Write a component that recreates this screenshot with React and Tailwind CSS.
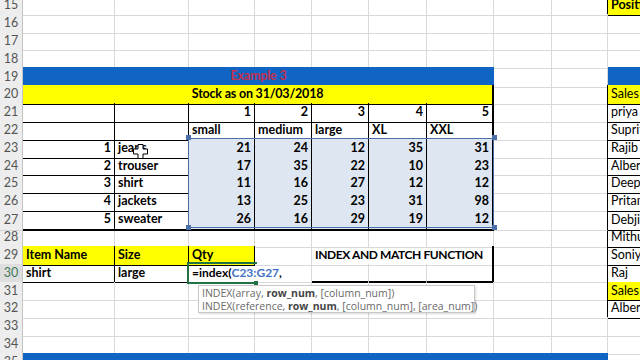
import React from "react";
import clsx from "clsx";

const ROW = "grid grid-cols-[23px_92px_74px_66px_57px_57px_58px_67px_58px_56px_1fr] h-[17.85px]";
const GL = "border-r border-b border-[#d9d9d9]";
const BK = "border-r border-b border-black";
const JB = "border-r border-b border-r-black border-b-[#d9d9d9]";

function Hdr({ n, active }) {
  return (
    <div
      className={clsx(
        "flex items-center justify-center text-[12.5px] border-r border-b border-r-[#c4c4c4] border-b-[#d4d4d4]",
        active ? "bg-[#dedede] text-[#3d7a58]" : "bg-[#ededed] text-[#555555]"
      )}
    >
      {n}
    </div>
  );
}

function C({ cls, children }) {
  return (
    <div className={clsx("flex items-center px-[3px] whitespace-nowrap min-w-0", cls)}>{children}</div>
  );
}

function Row({ children }) {
  return <div className={ROW}>{children}</div>;
}

function Empty({ from = 1, to = 8 }) {
  const out = [];
  for (let i = from; i <= to; i++) out.push(<C key={i} cls={GL} />);
  return <>{out}</>;
}

const data = [
  [1, "jeans", 21, 24, 12, 35, 31, "Rajib"],
  [2, "trouser", 17, 35, 22, 10, 23, "Albert"],
  [3, "shirt", 11, 16, 27, 12, 12, "Deepak"],
  [4, "jackets", 13, 25, 23, 31, 98, "Pritam"],
  [5, "sweater", 26, 16, 29, 19, 12, "Debjit"],
];

function KCell({ children, yellow, bold }) {
  return (
    <C cls={clsx("border-b border-b-black", yellow && "bg-[#ffff00]", bold && "font-bold")}>{children}</C>
  );
}

export default function App() {
  return (
    <div className="w-[640px] h-[360px] overflow-hidden bg-white font-['Lato',sans-serif] text-[12.5px] text-black">
      <div className="-mt-[4px]">
        {/* 15 */}
        <Row>
          <Hdr n={15} />
          <Empty to={8} />
          <C cls={JB} />
          <C cls="bg-[#ffff00] font-bold border-b border-b-black">Positi</C>
        </Row>
        {[16, 17, 18].map((n) => (
          <Row key={n}>
            <Hdr n={n} />
            <Empty to={9} />
            <C cls="border-b border-[#d9d9d9]" />
          </Row>
        ))}
        {/* 19 */}
        <Row>
          <Hdr n={19} />
          <C cls="col-span-7 justify-center bg-[#1065c4] border-b-2 border-b-black text-[#c4304e] font-bold tracking-[-0.2px]">
            Example 3
          </C>
          <Empty from={8} to={9} />
          <C cls="bg-[#1065c4] border-b border-b-black" />
        </Row>
        {/* 20 */}
        <Row>
          <Hdr n={20} />
          <C cls="col-span-7 justify-center bg-[#ffff00] border-r-2 border-b border-black font-bold text-[12.5px] tracking-[-0.2px]">
            Stock as on 31/03/2018
          </C>
          <C cls={GL} />
          <C cls={JB} />
          <KCell yellow>Sales</KCell>
        </Row>
        {/* 21 */}
        <Row>
          <Hdr n={21} />
          <C cls={BK} />
          <C cls={BK} />
          <C cls={clsx(BK, "justify-end font-bold")}>1</C>
          <C cls={clsx(BK, "justify-end font-bold")}>2</C>
          <C cls={clsx(BK, "justify-end font-bold")}>3</C>
          <C cls={clsx(BK, "justify-end font-bold")}>4</C>
          <C cls="border-r-2 border-b border-black justify-end font-bold">5</C>
          <C cls={GL} />
          <C cls={JB} />
          <KCell>priya</KCell>
        </Row>
        {/* 22 */}
        <Row>
          <Hdr n={22} />
          <C cls={BK} />
          <C cls={BK} />
          <C cls={clsx(BK, "font-bold")}>small</C>
          <C cls={clsx(BK, "font-bold")}>medium</C>
          <C cls={clsx(BK, "font-bold")}>large</C>
          <C cls={clsx(BK, "font-bold")}>XL</C>
          <C cls="border-r-2 border-b border-black font-bold">XXL</C>
          <C cls={GL} />
          <C cls={JB} />
          <KCell>Supriti</KCell>
        </Row>
        {/* 23-27 */}
        <div className="relative">
          {data.map((d, i) => {
            const last = i === data.length - 1;
            const bb = last ? "border-b-2" : "border-b";
            return (
              <Row key={i}>
                <Hdr n={23 + i} />
                <C cls={clsx("border-r border-black justify-end font-bold", bb)}>{d[0]}</C>
                <C cls={clsx("border-r border-black font-bold", bb)}>{d[1]}</C>
                <C cls={clsx("border-r border-black justify-end font-bold bg-[#dee6f1]", bb)}>{d[2]}</C>
                <C cls={clsx("border-r border-black justify-end font-bold bg-[#dee6f1]", bb)}>{d[3]}</C>
                <C cls={clsx("border-r border-black justify-end font-bold bg-[#dee6f1]", bb)}>{d[4]}</C>
                <C cls={clsx("border-r border-black justify-end font-bold bg-[#dee6f1]", bb)}>{d[5]}</C>
                <C cls={clsx("border-r-2 border-black justify-end font-bold bg-[#dee6f1]", bb)}>{d[6]}</C>
                <C cls={GL} />
                <C cls={JB} />
                <KCell>{d[7]}</KCell>
              </Row>
            );
          })}
          {/* range highlight overlay */}
          <div className="pointer-events-none absolute left-[188px] top-[-1px] w-[306px] bottom-0 border-[1.5px] border-[#4b6fa8]">
            <div className="absolute -left-[3.5px] -top-[3.5px] w-[5px] h-[5px] bg-[#4b6fa8]" />
            <div className="absolute -right-[3.5px] -top-[3.5px] w-[5px] h-[5px] bg-[#4b6fa8]" />
            <div className="absolute -left-[3.5px] -bottom-[3.5px] w-[5px] h-[5px] bg-[#4b6fa8]" />
            <div className="absolute -right-[3.5px] -bottom-[3.5px] w-[5px] h-[5px] bg-[#4b6fa8]" />
          </div>
          {/* move cursor */}
          <svg className="pointer-events-none absolute left-[133px] top-[5px]" width="15" height="15" viewBox="0 0 15 15">
            <path d="M5 0.5H10V5H14.5V10H10V14.5H5V10H0.5V5H5Z" fill="white" stroke="black" strokeWidth="1" />
          </svg>
        </div>
        {/* 28 */}
        <Row>
          <Hdr n={28} />
          <C cls="border-r border-b border-r-[#d9d9d9] border-b-black" />
          <C cls="border-r border-b border-r-[#d9d9d9] border-b-black" />
          <C cls="border-r border-b border-r-[#d9d9d9] border-b-black" />
          <Empty from={4} to={8} />
          <C cls={JB} />
          <KCell>Mithun</KCell>
        </Row>
        {/* 29 */}
        <Row>
          <Hdr n={29} />
          <C cls={clsx(BK, "bg-[#ffff00] font-bold")}>Item Name</C>
          <C cls={clsx(BK, "bg-[#ffff00] font-bold")}>Size</C>
          <C cls={clsx(BK, "bg-[#ffff00] font-bold")}>Qty</C>
          <C cls={GL} />
          <C cls="col-span-3 border-r-2 border-b border-r-black border-b-[#d9d9d9] font-bold text-[12px] tracking-[-0.4px]">
            INDEX AND MATCH FUNCTION
          </C>
          <C cls={GL} />
          <C cls={JB} />
          <KCell>Soniya</KCell>
        </Row>
        {/* 30 */}
        <Row>
          <Hdr n={30} active />
          <C cls={clsx(BK, "font-bold")}>shirt</C>
          <C cls={clsx(BK, "font-bold")}>large</C>
          <div className="relative z-10 flex items-center px-[3px] whitespace-nowrap border-b border-black font-bold text-[12px]">
            <div className="pointer-events-none absolute -left-[2px] -top-[2px] right-[-2px] bottom-[-2px] border-2 border-r-0 border-[#217346]" />
            <div className="pointer-events-none absolute right-[-3px] bottom-[-3px] w-[4px] h-[4px] bg-[#217346]" />
            <span className="relative">=index(</span>
            <span className="relative text-[#4472c4]">C23:G27</span>
            <span className="relative">,</span>
            <span className="relative ml-[1px] inline-block w-[1px] h-[14px] bg-black" />
            {/* function tooltip */}
            <div className="absolute left-[9px] top-[calc(100%+3px)] w-[277px] h-[28px] bg-white border border-[#c8c8c8] shadow-[1px_1px_2px_rgba(0,0,0,0.15)] px-[3px] pt-[1px] font-['Open_Sans',sans-serif] font-normal tracking-normal text-[10.5px] leading-[12.5px] text-[#6a6a6a]">
              <div>
                INDEX(array, <span className="font-bold text-[#444444]">row_num</span>, [column_num])
              </div>
              <div>
                INDEX(reference, <span className="font-bold text-[#444444]">row_num</span>, [column_num], [area_num])
              </div>
            </div>
          </div>
          <C cls={GL} />
          <C cls="border-r border-b-2 border-r-[#d9d9d9] border-b-black" />
          <C cls="border-r border-b-2 border-r-[#d9d9d9] border-b-black" />
          <C cls="border-r-2 border-b-2 border-black" />
          <C cls={GL} />
          <C cls={JB} />
          <KCell>Raj</KCell>
        </Row>
        {/* 31 */}
        <Row>
          <Hdr n={31} />
          <Empty to={8} />
          <C cls={JB} />
          <KCell yellow>Sales</KCell>
        </Row>
        {/* 32 */}
        <Row>
          <Hdr n={32} />
          <Empty to={8} />
          <C cls={JB} />
          <KCell>Albert</KCell>
        </Row>
        {[33, 34].map((n) => (
          <Row key={n}>
            <Hdr n={n} />
            <Empty to={9} />
            <C cls="border-b border-[#d9d9d9]" />
          </Row>
        ))}
        {/* 35 */}
        <Row>
          <Hdr n={35} />
          <C cls="col-span-9 bg-[#1065c4]" />
          <C cls="" />
        </Row>
      </div>
    </div>
  );
}
